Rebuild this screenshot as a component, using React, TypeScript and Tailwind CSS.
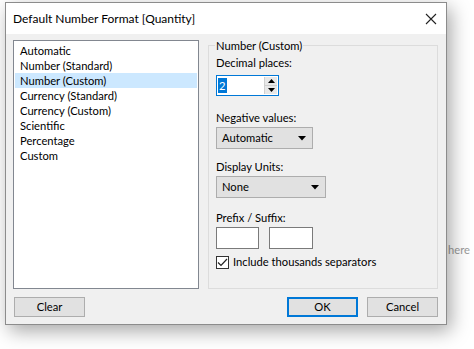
import React from "react";

const items = [
  "Automatic",
  "Number (Standard)",
  "Number (Custom)",
  "Currency (Standard)",
  "Currency (Custom)",
  "Scientific",
  "Percentage",
  "Custom",
];

function Caret() {
  return (
    <svg width="8" height="5" viewBox="0 0 8 5">
      <path d="M0 0 H8 L4 4.5 Z" fill="#000" />
    </svg>
  );
}

function Dropdown({ label, width }: { label: string; width: string }) {
  return (
    <div className={`${width} h-[22px] bg-[#e1e1e1] border border-[#adadad] flex items-center justify-between pl-[5px] pr-[6px]`}>
      <span>{label}</span>
      <Caret />
    </div>
  );
}

export default function App() {
  return (
    <div
      className="relative w-[474px] h-[349px] bg-white overflow-hidden text-[11.2px] text-black"
      style={{ fontFamily: '"Segoe UI", Lato, "Noto Sans", sans-serif' }}
    >
      <span className="absolute left-[448px] top-[242px] text-[#9a9a9a] leading-[16px]">here</span>
      <div className="relative ml-[5px] mt-[2px] w-[442px] h-[323px] border border-[#8c8c8c] bg-[#f0f0f0] flex flex-col shadow-[4px_6px_18px_rgba(0,0,0,0.35)]">
        {/* Title bar */}
        <div className="h-[31px] bg-white flex items-center justify-between pl-[7px] pr-[9px] shrink-0">
          <span className="leading-[16px] pt-[1px] text-[12px]">Default Number Format [Quantity]</span>
          <svg width="12" height="12" viewBox="0 0 12 12">
            <path d="M1 1 L11 11 M11 1 L1 11" stroke="#222" strokeWidth="1.1" />
          </svg>
        </div>
        {/* Body */}
        <div className="flex flex-col px-[7px] pt-[6px]">
          <div className="flex">
            {/* List */}
            <div className="w-[186px] h-[249px] bg-white border border-[#828790] pt-[2px] px-[1px] shrink-0">
              {items.map((it, i) => (
                <div
                  key={it}
                  className={`h-[15px] leading-[15px] pl-[5px] ${i === 2 ? "bg-[#cce8ff]" : ""}`}
                >
                  {it}
                </div>
              ))}
            </div>
            {/* Group box */}
            <div className="ml-[9px] mt-[5px] w-[230px] h-[244px] border border-[#dcdcdc] flex flex-col pl-[7px]">
              <div className="-mt-[8px] leading-[16px] self-start bg-[#f0f0f0] px-[1px] -ml-[1px]">Number (Custom)</div>
              <div className="mt-[1px] leading-[16px]">Decimal places:</div>
              <div className="mt-[4px] w-[63px] h-[21px] bg-white border border-[#0078d7] flex items-stretch">
                <div className="flex-1 flex items-center pl-[1px]">
                  <span className="bg-[#0078d7] text-white leading-[15px] px-[1px]">2</span>
                </div>
                <div className="w-[13px] flex flex-col border-l border-[#d0d0d0] my-[1px] mr-[1px]">
                  <div className="flex-1 bg-[#e8e8e8] border-b border-[#d0d0d0] flex items-center justify-center">
                    <svg width="7" height="4" viewBox="0 0 7 4"><path d="M0 4 H7 L3.5 0 Z" fill="#000" /></svg>
                  </div>
                  <div className="flex-1 bg-[#e8e8e8] flex items-center justify-center">
                    <svg width="7" height="4" viewBox="0 0 7 4"><path d="M0 0 H7 L3.5 4 Z" fill="#000" /></svg>
                  </div>
                </div>
              </div>
              <div className="mt-[14px] leading-[16px]">Negative values:</div>
              <div className="mt-[1px]">
                <Dropdown label="Automatic" width="w-[97px]" />
              </div>
              <div className="mt-[10px] leading-[16px]">Display Units:</div>
              <div className="mt-[1px]">
                <Dropdown label="None" width="w-[110px]" />
              </div>
              <div className="mt-[12px] leading-[16px]">Prefix / Suffix:</div>
              <div className="mt-[1px] flex gap-[10px]">
                <div className="w-[43px] h-[22px] bg-white border border-[#7a7a7a]" />
                <div className="w-[44px] h-[22px] bg-white border border-[#7a7a7a]" />
              </div>
              <div className="mt-[5px] flex items-center gap-[4px]">
                <div className="w-[13px] h-[13px] bg-white border border-[#333] flex items-center justify-center">
                  <svg width="11" height="9" viewBox="0 0 11 9">
                    <path d="M1 4.5 L4 7.5 L10 1" stroke="#222" strokeWidth="1.2" fill="none" />
                  </svg>
                </div>
                <span className="leading-[16px]">Include thousands separators</span>
              </div>
            </div>
          </div>
          {/* Buttons */}
          <div className="mt-[8px] flex items-center">
            <div className="ml-[1px] w-[71px] h-[20px] bg-[#e1e1e1] border border-[#adadad] flex items-center justify-center">Clear</div>
            <div className="flex-1" />
            <div className="w-[71px] h-[20px] bg-[#e1e1e1] border-2 border-[#0078d7] flex items-center justify-center">OK</div>
            <div className="ml-[9px] mr-[1px] w-[71px] h-[20px] bg-[#e1e1e1] border border-[#adadad] flex items-center justify-center">Cancel</div>
          </div>
        </div>
      </div>
    </div>
  );
}
